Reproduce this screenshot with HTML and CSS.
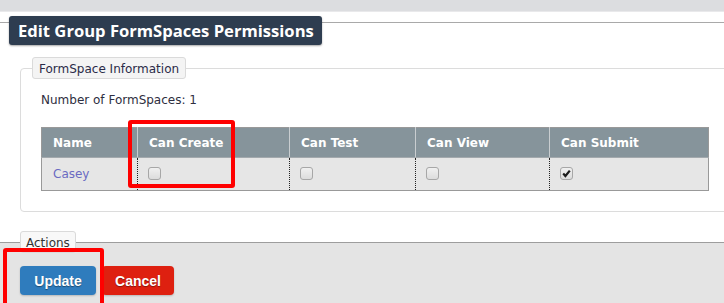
FILE: index.html
```html
<!DOCTYPE html>
<html>
<head>
<meta charset="utf-8">
<link rel="stylesheet" href="styles.css">
</head>
<body>
<div class="topbar"></div>
<div class="page">
  <div class="page-head">
    <h1 class="title">Edit Group FormSpaces Permissions</h1>
  </div>
  <fieldset class="box">
    <legend class="legend">FormSpace Information</legend>
    <div class="box-body">
      <p class="count">Number of FormSpaces: 1</p>
      <table class="grid">
        <colgroup>
          <col style="width:96px"><col style="width:152px"><col style="width:126px"><col style="width:134px"><col>
        </colgroup>
        <thead>
          <tr><th>Name</th><th>Can Create</th><th>Can Test</th><th>Can View</th><th>Can Submit</th></tr>
        </thead>
        <tbody>
          <tr>
            <td><a class="link" href="#">Casey</a></td>
            <td><span class="cb"></span></td>
            <td><span class="cb"></span></td>
            <td><span class="cb"></span></td>
            <td><span class="cb checked"><svg viewBox="0 0 11 11" width="11" height="11"><path d="M2.2 5.6 L4.4 8 L8.8 2.6" fill="none" stroke="#1a1a1a" stroke-width="2.2"/></svg></span></td>
          </tr>
        </tbody>
      </table>
    </div>
  </fieldset>
  <fieldset class="actions">
    <legend class="legend legend-actions">Actions</legend>
    <div class="buttons">
      <button class="btn btn-blue">Update</button>
      <button class="btn btn-red">Cancel</button>
    </div>
  </fieldset>
</div>
<div class="mark mark-create"></div>
<div class="mark mark-update"></div>
</body>
</html>
```
FILE: styles.css
```css
html, body {
  margin: 0;
  padding: 0;
  background: #ffffff;
  overflow: hidden;
  height: 303px;
}
body {
  font-family: "DejaVu Sans", Verdana, sans-serif;
  font-size: 12px;
  color: #333;
  position: relative;
}
.topbar {
  height: 11px;
  background: #dcdde0;
  border-bottom: 1px solid #e9e9eb;
}
.page-head {
  margin-top: 10px;
  border-top: 1px solid #a9a9a9;
  padding-left: 9px;
  height: 23px;
}
.title {
  display: inline-block;
  margin: -7px 0 0 0;
  height: 29px;
  line-height: 29px;
  padding: 0 8px 0 9px;
  background: #2e3d50;
  color: #fff;
  font-family: "Open Sans", sans-serif;
  font-weight: 700;
  font-size: 16.6px;
  border-radius: 3px;
  box-shadow: 0 1px 2px rgba(0,0,0,0.35);
}
.box {
  margin: 11px -20px 0 20px;
  padding: 0;
  border: 1px solid #dcdcdc;
  border-radius: 4px;
  min-width: 0;
}
.legend {
  margin-left: 11px;
  padding: 0 6px;
  height: 22px;
  line-height: 22px;
  box-sizing: border-box;
  background: #f4f4f4;
  border: 1px solid #dadada;
  border-radius: 3px;
  color: #2b2b48;
  font-size: 12px;
}
.box-body {
  padding: 0 0 20px 20px;
}
.count {
  margin: 13px 0 19px;
  line-height: 16px;
  color: #2e2e40;
}
.grid {
  border-collapse: collapse;
  width: 668px;
  table-layout: fixed;
  border: 1px solid #999;
}
.grid th {
  background: #86949b;
  color: #fff;
  font-weight: 700;
  text-align: left;
  height: 29px;
  padding: 0 11px;
  border-left: 1px solid #c9cdd0;
  border-bottom: 1px solid #a3a9ad;
}
.grid th:first-child { border-left: none; }
.grid td {
  background: #e6e6e6;
  height: 32px;
  padding: 0 10px;
  border-left: 1px dotted #222;
  vertical-align: middle;
}
.grid td:first-child { border-left: none; padding-left: 11px; }
.link {
  color: #6a6ac2;
  text-decoration: none;
}
.cb {
  display: inline-block;
  box-sizing: border-box;
  width: 13px;
  height: 13px;
  border: 1px solid #a7a7a7;
  border-radius: 3px;
  background: linear-gradient(#f0f0f0, #dcdcdc);
  vertical-align: middle;
  position: relative;
  top: -1px;
}
.cb svg { display: block; margin: 0; }
.actions {
  margin: 19px 0 0 0;
  padding: 0;
  border: none;
  border-top: 1px solid #9d9d9d;
  background: #e4e4e4;
  height: 80px;
  min-width: 0;
}
.legend-actions {
  margin-left: 20px;
  padding: 0 5px;
  background: #f8f8f8;
  color: #333;
}
.buttons {
  display: flex;
  gap: 6px;
  padding: 13px 0 0 20px;
}
.btn {
  height: 29px;
  border: none;
  border-radius: 4px;
  color: #fff;
  font-family: "Liberation Sans", Arial, sans-serif;
  font-weight: 700;
  font-size: 14px;
  text-shadow: 0 1px 1px rgba(0,0,0,0.4);
  padding: 0;
  box-shadow: 0 1px 2px rgba(0,0,0,0.2);
}
.btn-blue { background: #2f7cbd; width: 76px; }
.btn-red { background: #de2010; width: 72px; }
.mark {
  position: absolute;
  border: 4px solid #ff0000;
  border-radius: 3px;
  box-sizing: border-box;
}
.mark-create { left: 128px; top: 120px; width: 107px; height: 68px; }
.mark-update { left: 3px; top: 248px; width: 101px; height: 70px; }
```
